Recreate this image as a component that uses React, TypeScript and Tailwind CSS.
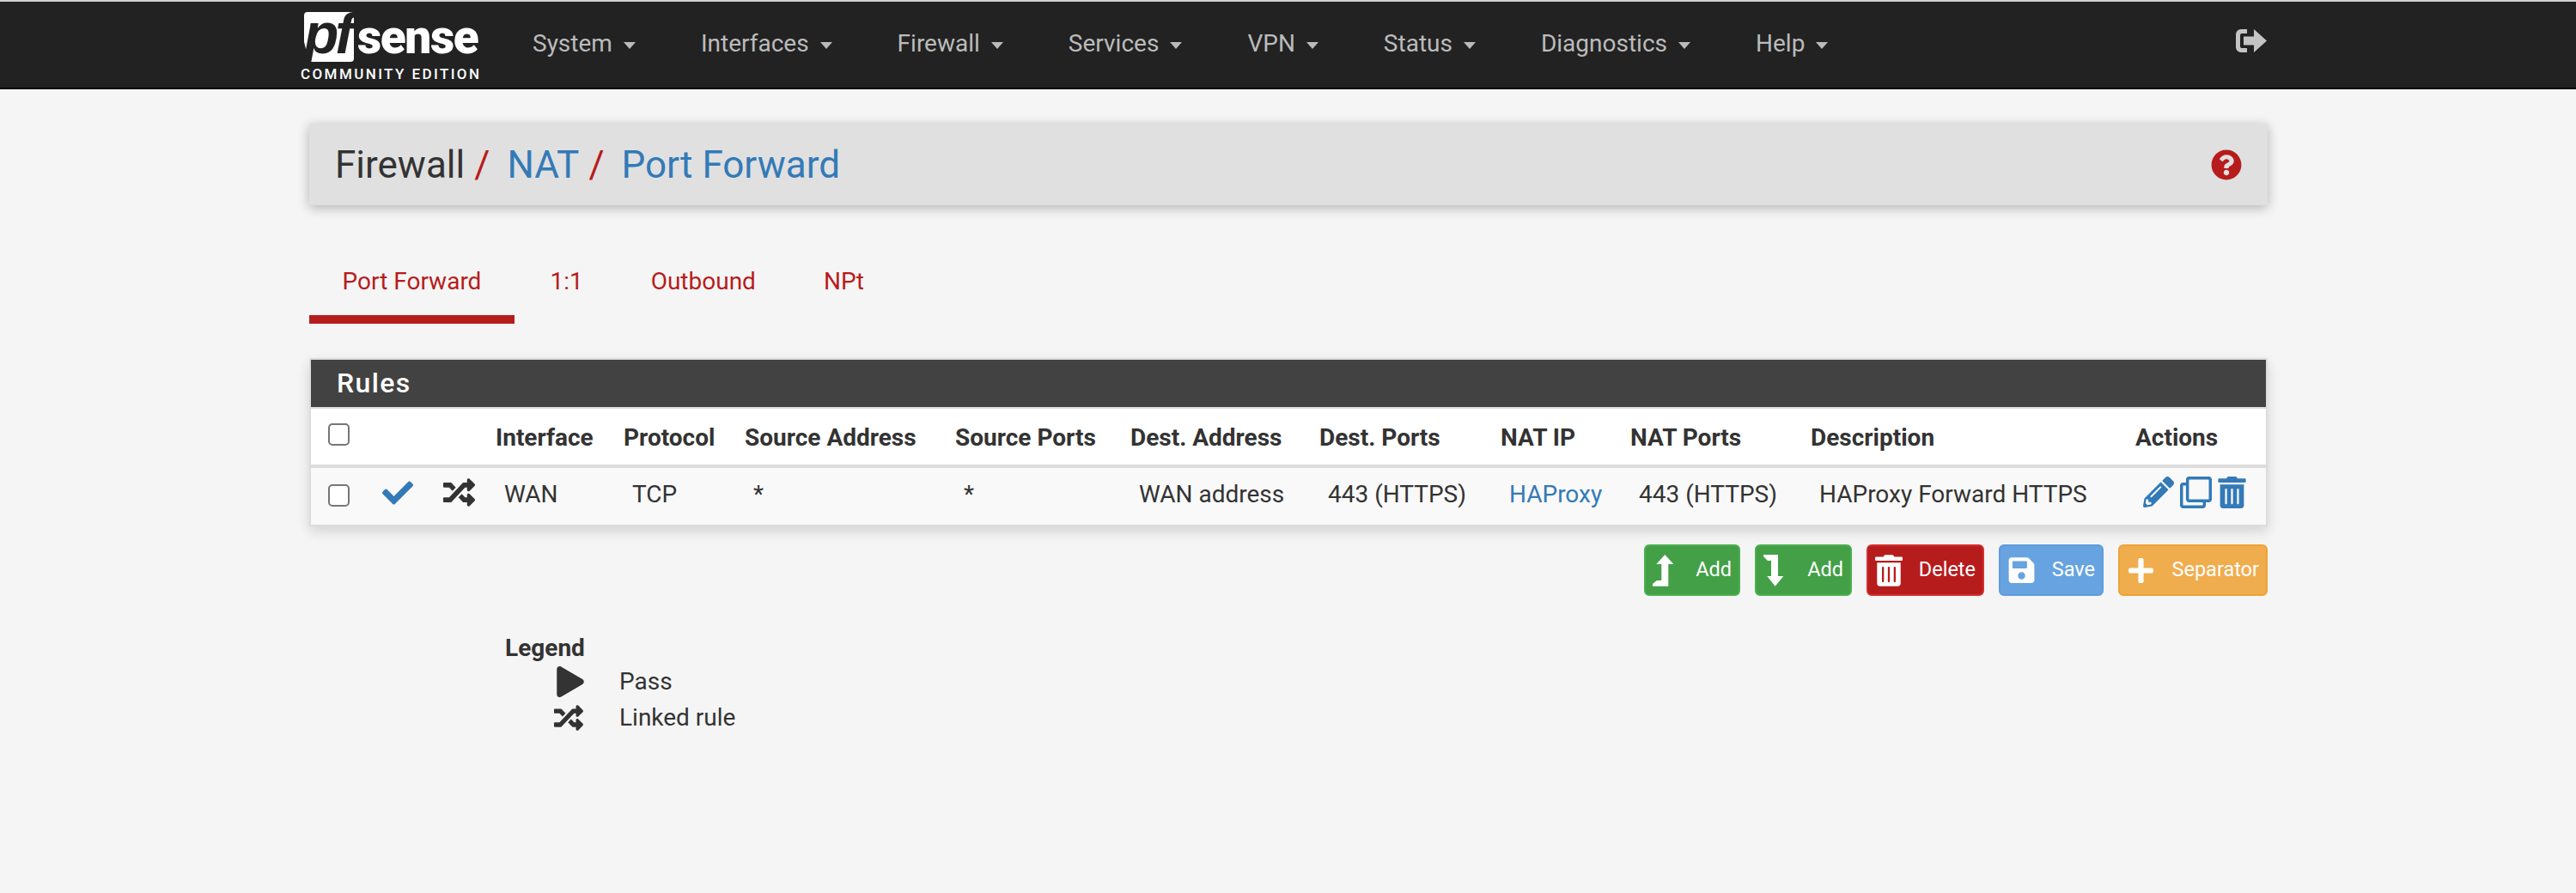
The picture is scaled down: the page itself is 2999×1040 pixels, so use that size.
import { FaCheck, FaRandom, FaPencilAlt, FaRegClone, FaTrashAlt, FaSave, FaPlus, FaQuestionCircle, FaPlay } from 'react-icons/fa';

const navItems = ['System', 'Interfaces', 'Firewall', 'Services', 'VPN', 'Status', 'Diagnostics', 'Help'];
const tabs = ['Port Forward', '1:1', 'Outbound', 'NPt'];
const columns = [
  { label: 'Interface', width: 'w-[149px]' },
  { label: 'Protocol', width: 'w-[141px]' },
  { label: 'Source Address', width: 'w-[245px]' },
  { label: 'Source Ports', width: 'w-[204px]' },
  { label: 'Dest. Address', width: 'w-[220px]' },
  { label: 'Dest. Ports', width: 'w-[211px]' },
  { label: 'NAT IP', width: 'w-[151px]' },
  { label: 'NAT Ports', width: 'w-[210px]' },
  { label: 'Description', width: 'w-[378px]' },
];
const cells = ['WAN', 'TCP', '*', '*', 'WAN address', '443 (HTTPS)', 'HAProxy', '443 (HTTPS)', 'HAProxy Forward HTTPS'];

const Logo = () => (
  <div className="w-[212px] ml-[-10px] self-start mt-[12px] flex flex-col items-start">
    <div className="flex items-start h-[58px]">
      <div className="relative w-[58px] h-[58px] ml-[4px]">
        <div className="w-full h-full bg-white rounded-[4px] [clip-path:polygon(0_0,100%_0,100%_100%,10%_100%,0_60%)]" />
        <span className="absolute left-[0px] top-[-8px] font-['Liberation_Sans'] italic font-bold text-[#222222] text-[66px] leading-[66px] tracking-[-4px]">pf</span>
      </div>
      <span className="font-['Roboto'] font-black text-white text-[55px] leading-[56px] tracking-[-1.4px] ml-[4px] mt-[1px]">sense</span>
    </div>
    <span className="text-white text-[17px] leading-[20px] tracking-[2.4px] mt-[4px] font-medium">COMMUNITY EDITION</span>
  </div>
);

const SignOutIcon = () => (
  <svg viewBox="0 0 37 27" className="ml-auto mb-[9px] w-[37px] h-[27px] fill-[#c4c4c4]">
    <path d="M13 0H6a6 6 0 0 0-6 6v15a6 6 0 0 0 6 6h7v-5H7a2 2 0 0 1-2-2V7a2 2 0 0 1 2-2h6z" />
    <path d="M9 8.5h12V0l15 13.5L21 27v-8.5H9z" />
  </svg>
);

const LevelUpIcon = () => (
  <svg viewBox="0 0 25 37" className="w-[25px] h-[37px] fill-white">
    <path d="M14.3 0 24.3 11H18.3V36.7H0V34L5 30H10.3V11H4.3z" />
  </svg>
);

const LevelDownIcon = () => (
  <svg viewBox="0 0 24 37" className="w-[24px] h-[37px] fill-white">
    <path d="M0 0H17V25H23.3L13.7 36.7 4.3 25H9V7H5L0 2z" />
  </svg>
);

const ActionButton = ({ icon, label, className }: { icon: React.ReactNode; label: string; className: string }) => (
  <button className={`h-[60px] border-2 rounded-[6px] text-white text-[23.5px] flex items-center justify-between pl-[8px] pr-[8px] ${className}`}>
    {icon}
    <span>{label}</span>
  </button>
);

export default function App() {
  return (
    <div className="min-h-screen bg-[#f5f5f5] font-['Roboto',sans-serif] text-[28px] text-[#333333]">
      <nav className="h-[104px] bg-[#222222] border-t-2 border-t-[#d0d0d0] border-b-2 border-b-black flex items-center pl-[360px] pr-[359px]">
        <Logo />
        <ul className="flex items-center ml-[20px] text-[#bbbbbb]">
          {navItems.map((item) => (
            <li key={item} className="flex items-center px-[38px] mt-[-3px]">
              {item}
              <span className="ml-[13px] mt-[4px] w-0 h-0 border-x-[7px] border-x-transparent border-t-[8px] border-t-[#bbbbbb]" />
            </li>
          ))}
        </ul>
        <SignOutIcon />
      </nav>

      <main className="ml-[360px] w-[2280px]">
        <header className="mt-[40px] h-[95px] bg-[#e0e0e0] rounded-[2px] shadow-[0_3px_14px_rgba(0,0,0,0.28)] flex items-center justify-between pl-[30px] pr-[30px]">
          <h1 className="text-[44px] leading-none flex items-center">
            <span>Firewall</span>
            <span className="text-[#b71c1c] ml-[11px]">/</span>
            <span className="text-[#337ab7] ml-[20px]">NAT</span>
            <span className="text-[#b71c1c] ml-[11px]">/</span>
            <span className="text-[#337ab7] ml-[20px]">Port Forward</span>
          </h1>
          <FaQuestionCircle className="text-[#b71c1c] w-[36px] h-[36px]" />
        </header>

        <ul className="flex mt-[51px] text-[#b71c1c]">
          {tabs.map((tab, i) => (
            <li key={tab} className={`leading-[76px] h-[87px] ${i === 0 ? 'px-[38.5px] border-b-[10px] border-b-[#b71c1c]' : 'px-[39.5px]'} ${i === 1 ? 'ml-[2px]' : ''}`}>
              {tab}
            </li>
          ))}
        </ul>

        <section className="mt-[40px] border-2 border-[#dddddd] shadow-[0_6px_14px_rgba(0,0,0,0.14)]">
          <h2 className="h-[55px] bg-[#424242] text-white text-[32px] font-medium tracking-[1.4px] pl-[30px] leading-[55px]">Rules</h2>
          <table className="table-fixed w-[2276px] border-t-2 border-t-[#dddddd]">
            <thead>
              <tr className="h-[68px] bg-white border-b-4 border-b-[#dddddd]">
                <th className="w-[66px] pl-[20px] text-left">
                  <span className="block w-[25px] h-[26px] mt-[-6px] border-2 border-[#767676] rounded-[5px] bg-white" />
                </th>
                <th className="w-[70px]" />
                <th className="w-[69px]" />
                {columns.map((col) => (
                  <th key={col.label} className={`${col.width} pl-[10px] pt-[2px] text-left font-bold`}>{col.label}</th>
                ))}
                <th className="w-[162px] pl-[10px] pt-[2px] text-left font-bold">Actions</th>
              </tr>
            </thead>
            <tbody>
              <tr className="h-[68px] bg-[#f9f9f9]">
                <td className="pl-[20px]">
                  <span className="block w-[25px] h-[26px] mt-[-2px] border-2 border-[#767676] rounded-[5px] bg-white" />
                </td>
                <td className="pl-[17px]">
                  <FaCheck className="text-[#337ab7] w-[36px] h-[36px] mt-[-8px]" />
                </td>
                <td className="pl-[18px]">
                  <FaRandom className="w-[37px] h-[37px] mt-[-10px]" />
                </td>
                {cells.map((cell, i) => (
                  <td key={i} className={`pl-[20px] pb-[4px] ${cell === 'HAProxy' ? 'text-[#337ab7]' : ''}`}>{cell}</td>
                ))}
                <td className="pl-[19px]">
                  <div className="flex items-center gap-[7px] text-[#337ab7] mt-[-10px]">
                    <FaPencilAlt className="w-[36px] h-[36px]" />
                    <FaRegClone className="w-[37px] h-[37px]" />
                    <FaTrashAlt className="w-[33px] h-[37px]" />
                  </div>
                </td>
              </tr>
            </tbody>
          </table>
        </section>

        <div className="flex justify-end gap-[17px] mt-[21px]">
          <ActionButton className="w-[112px] bg-[#43a047] border-[#4caf50]" icon={<LevelUpIcon />} label="Add" />
          <ActionButton className="w-[113px] bg-[#43a047] border-[#4caf50]" icon={<LevelDownIcon />} label="Add" />
          <ActionButton className="w-[137px] bg-[#b71c1c] border-[#d32f2f]" icon={<FaTrashAlt className="w-[32px] h-[37px]" />} label="Delete" />
          <ActionButton className="w-[122px] bg-[#67a3e0] border-[#5f9cda]" icon={<FaSave className="w-[33px] h-[34px]" />} label="Save" />
          <ActionButton className="w-[174px] bg-[#f0ad4e] border-[#eea236]" icon={<FaPlus className="w-[33px] h-[33px]" />} label="Separator" />
        </div>

        <div className="ml-[228px] mt-[43px] leading-[42px]">
          <p className="font-bold leading-[36px]">Legend</p>
          <div className="flex items-center h-[42px]">
            <span className="w-[92px] flex justify-end"><FaPlay className="w-[32px] h-[36px]" /></span>
            <span className="ml-[41px]">Pass</span>
          </div>
          <div className="flex items-center h-[42px]">
            <span className="w-[92px] flex justify-end"><FaRandom className="w-[36px] h-[34px]" /></span>
            <span className="ml-[41px]">Linked rule</span>
          </div>
        </div>
      </main>
    </div>
  );
}
